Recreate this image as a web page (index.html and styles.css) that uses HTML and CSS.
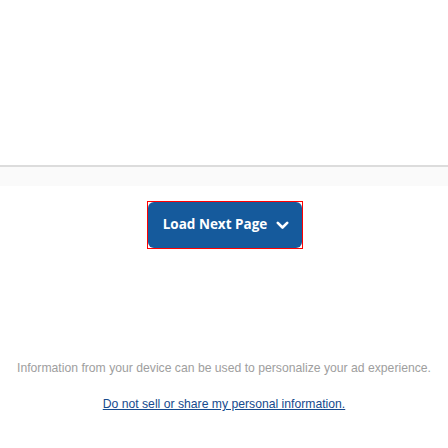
FILE: index.html
```html
<!DOCTYPE html>
<html>
<head>
<meta charset="utf-8">
<link rel="stylesheet" href="styles.css">
</head>
<body>
<div class="top"></div>
<div class="band"></div>
<div class="actions">
  <div class="btn-frame">
    <button class="load-btn" type="button">
      <span class="load-label">Load Next Page</span>
      <svg class="chev" width="13" height="9" viewBox="0 0 13 9"><path d="M1.8 1.8 L6.5 6.5 L11.2 1.8" fill="none" stroke="#fff" stroke-width="2.6" stroke-linecap="round" stroke-linejoin="round"/></svg>
    </button>
  </div>
</div>
<p class="info">Information from your device can be used to personalize your ad experience.</p>
<p class="privacy"><a href="#" class="privacy-link">Do not sell or share my personal information.</a></p>
</body>
</html>
```

FILE: styles.css
```css
html, body {
  margin: 0;
  padding: 0;
  background: #ffffff;
}
.top {
  height: 165px;
}
.band {
  height: 19px;
  border-top: 2px solid #dcdcdc;
  background: #fafafa;
}
.actions {
  display: flex;
  justify-content: center;
  padding-top: 16px;
  padding-left: 2px;
}
.btn-frame {
  outline: 1px solid #ff0000;
  line-height: 0;
}
.load-btn {
  display: flex;
  align-items: center;
  justify-content: center;
  gap: 9px;
  width: 154px;
  height: 46px;
  padding: 0 0 0 2px;
  border: none;
  border-radius: 6px;
  background: #155a9c;
  color: #ffffff;
  font-family: "Open Sans", sans-serif;
  font-weight: 700;
  font-size: 13.5px;
  line-height: 1;
  cursor: pointer;
}
.chev {
  display: block;
  margin-top: 1px;
}
.info {
  margin: 113px 0 0;
  text-align: center;
  font-family: "Liberation Sans", Arial, sans-serif;
  font-size: 12.2px;
  color: #9e9e9e;
}
.privacy {
  margin: 22px 0 0;
  text-align: center;
  font-family: "Liberation Sans", Arial, sans-serif;
  font-size: 12.2px;
}
.privacy-link {
  color: #164a8e;
  text-decoration: underline;
}
```
